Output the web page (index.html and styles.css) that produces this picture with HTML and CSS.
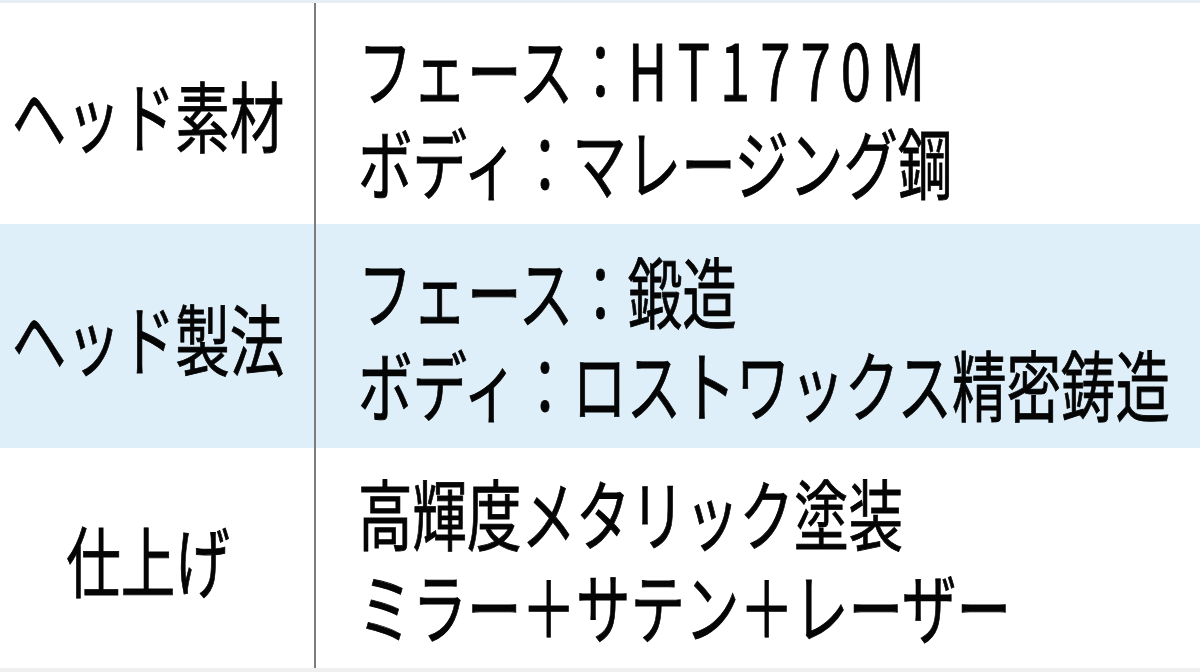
FILE: index.html
```html
<!DOCTYPE html>
<html lang="ja">
<head>
<meta charset="utf-8">
<link rel="stylesheet" href="styles.css">
</head>
<body>
<div class="sheet">
  <div class="strip strip-top"></div>
  <div class="row row-1">
    <div class="label"><div class="txt">ヘッド素材</div></div>
    <div class="value"><div class="txt"><div>フェース：<span class="latin">HT1770M</span></div><div>ボディ：マレージング鋼</div></div></div>
  </div>
  <div class="row row-2 shaded">
    <div class="label"><div class="txt">ヘッド製法</div></div>
    <div class="value"><div class="txt"><div>フェース：鍛造</div><div>ボディ：ロストワックス精密鋳造</div></div></div>
  </div>
  <div class="row row-3">
    <div class="label"><div class="txt">仕上げ</div></div>
    <div class="value"><div class="txt"><div>高輝度メタリック塗装</div><div>ミラー＋サテン＋レーザー</div></div></div>
  </div>
  <div class="strip strip-bottom"></div>
</div>
</body>
</html>
```

FILE: styles.css
```css
html, body {
  margin: 0;
  padding: 0;
  background: #ffffff;
}
body {
  width: 1200px;
  height: 672px;
  overflow: hidden;
  font-family: "Noto Sans CJK JP", "Noto Sans", sans-serif;
  font-weight: 400;
  color: #050505;
}
.sheet {
  display: grid;
  grid-template-rows: 3px 221px 224px 220px 4px;
  width: 1200px;
  height: 672px;
}
.strip-top {
  background: #e7eef5;
}
.strip-bottom {
  background: #efefef;
}
.row {
  display: grid;
  grid-template-columns: 316px 1fr;
  background: #ffffff;
}
.row.shaded {
  background: #deeff9;
}
.label {
  border-right: 2px solid #7d7d7d;
  display: flex;
  align-items: center;
  justify-content: center;
  padding-right: 18px;
}
.value {
  display: flex;
  align-items: center;
  padding-left: 42px;
}
.txt {
  font-size: 54.5px;
  line-height: 65px;
  white-space: nowrap;
  transform: scaleY(1.42);
  -webkit-text-stroke: 0.6px #050505;
}
.latin {
  letter-spacing: 10px;
}
```
